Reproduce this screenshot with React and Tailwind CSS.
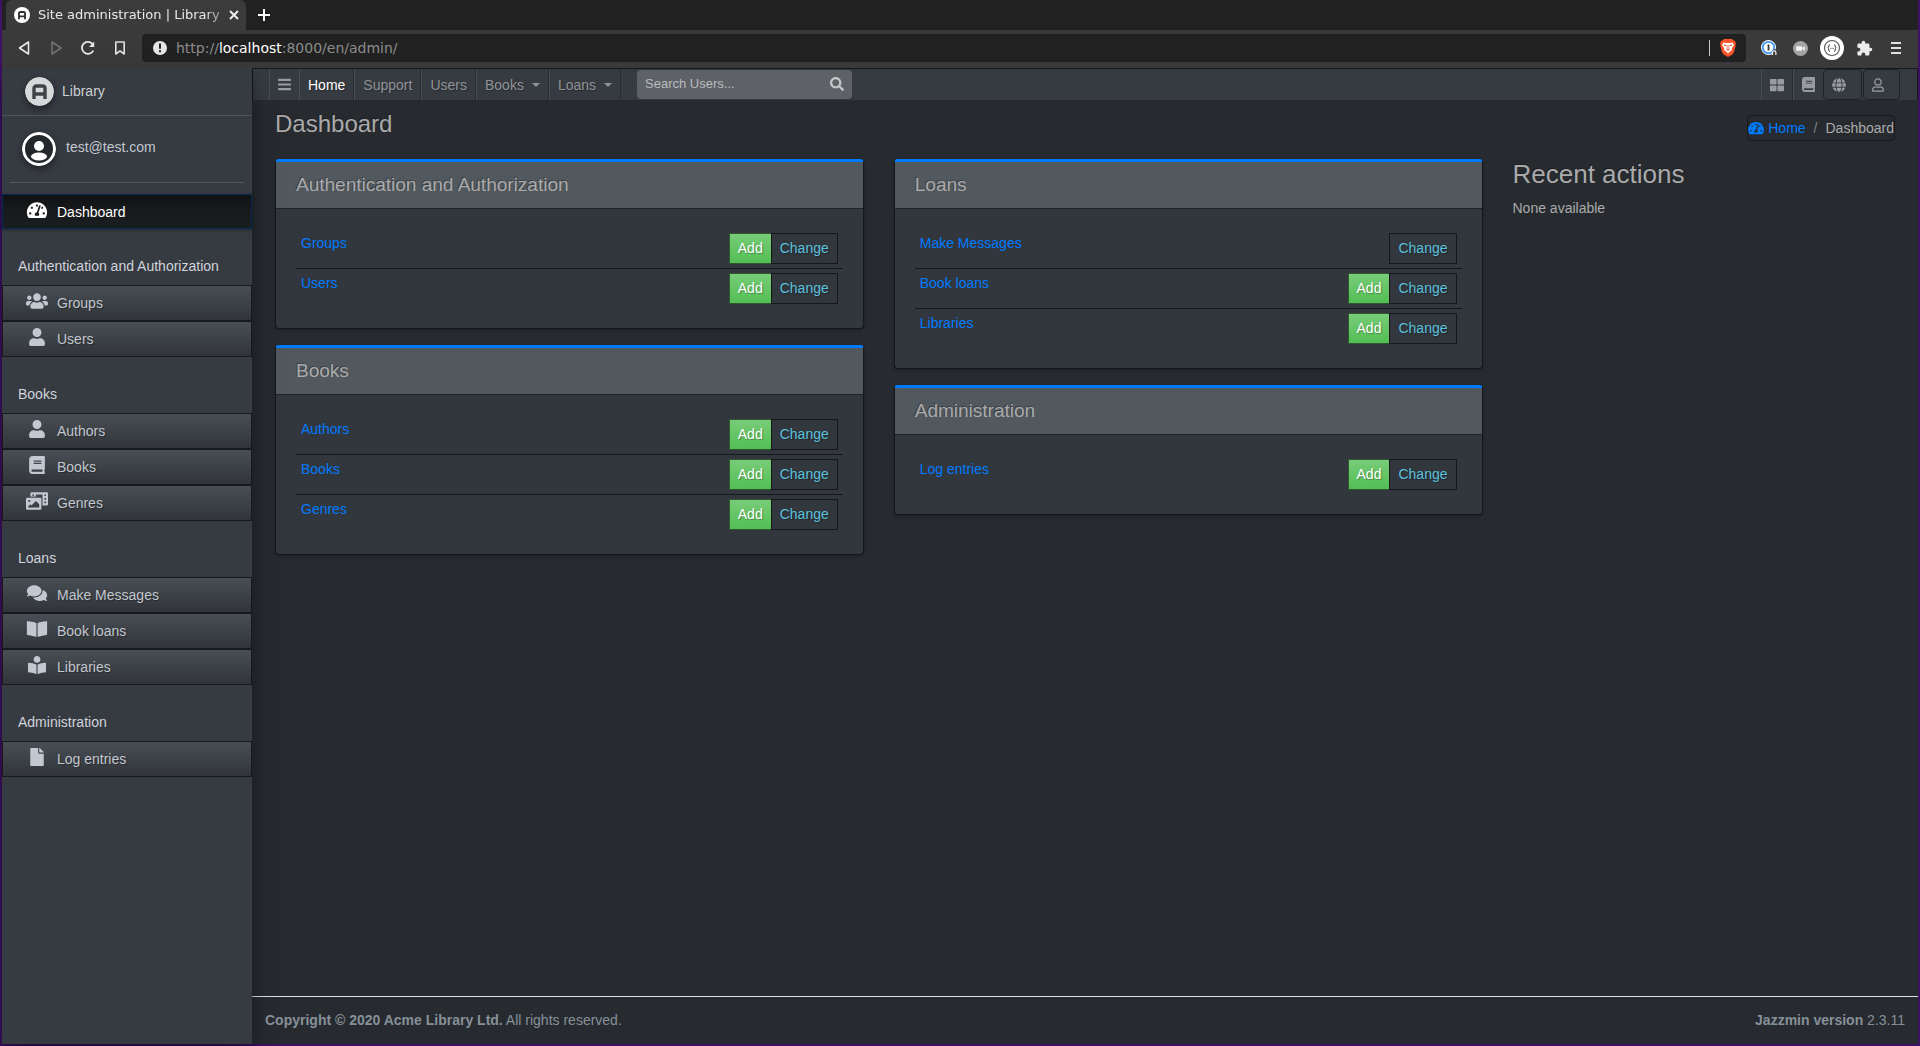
import React, { useState } from 'react';
import {
  FaBars,
  FaBook,
  FaBookOpen,
  FaBookReader,
  FaComments,
  FaFile,
  FaGlobe,
  FaPhotoVideo,
  FaRegUser,
  FaSearch,
  FaTachometerAlt,
  FaThLarge,
  FaUser,
  FaUsers,
} from 'react-icons/fa';
import { MdExtension } from 'react-icons/md';

const menu = [
  { title: 'Authentication and Authorization', items: [['Groups', FaUsers], ['Users', FaUser]] },
  { title: 'Books', items: [['Authors', FaUser], ['Books', FaBook], ['Genres', FaPhotoVideo]] },
  { title: 'Loans', items: [['Make Messages', FaComments], ['Book loans', FaBookOpen], ['Libraries', FaBookReader]] },
  { title: 'Administration', items: [['Log entries', FaFile]] },
];

const leftCards = [
  { title: 'Authentication and Authorization', models: [{ name: 'Groups', add: true }, { name: 'Users', add: true }] },
  { title: 'Books', models: [{ name: 'Authors', add: true }, { name: 'Books', add: true }, { name: 'Genres', add: true }] },
];

const rightCards = [
  { title: 'Loans', models: [{ name: 'Make Messages', add: false }, { name: 'Book loans', add: true }, { name: 'Libraries', add: true }] },
  { title: 'Administration', models: [{ name: 'Log entries', add: true }] },
];

function Logo({ className, bg, fg }) {
  return (
    <svg className={className} viewBox="0 0 29 29" aria-hidden="true">
      <circle cx="14.5" cy="14.5" r="14.5" fill={bg} />
      <path d="M9 22V11.5Q9 9 11.5 9H17.5Q20 9 20 11.5V22M9 17H20" fill="none" stroke={fg} strokeWidth="3.4" />
    </svg>
  );
}

function BrowserBar() {
  return (
    <header className="font-['DejaVu_Sans',sans-serif]">
      <div className="flex h-[30px] items-center bg-[#212121] pl-1">
        <div className="flex h-full w-60 items-center rounded-t-md bg-[#3b3b3b] px-2 pr-1.5">
          <Logo className="size-4 shrink-0" bg="#ffffff" fg="#333333" />
          <span className="ml-2 flex-1 whitespace-nowrap text-[13px] text-[#e8e8e8] [mask-image:linear-gradient(to_right,black_88%,#0003)]">
            Site administration | Library
          </span>
          <button type="button" aria-label="Close tab">
            <svg className="size-3" viewBox="0 0 12 12" stroke="#eeeeee" strokeWidth="2">
              <path d="M2 2l8 8M10 2l-8 8" />
            </svg>
          </button>
        </div>
        <button type="button" aria-label="New tab" className="ml-3">
          <svg className="size-3" viewBox="0 0 12 12" stroke="#ffffff" strokeWidth="2">
            <path d="M6 0v12M0 6h12" />
          </svg>
        </button>
      </div>
      <div className="flex h-[38px] items-center bg-[#3a3a3a] pb-0.5 pl-3.5">
        <button type="button" aria-label="Back" className="mr-4">
          <svg className="size-4" viewBox="0 0 16 16" fill="none" stroke="#e8e8e8" strokeWidth="1.6" strokeLinejoin="round">
            <path d="M12.5 2v12L3.5 8z" />
          </svg>
        </button>
        <button type="button" aria-label="Forward" className="mr-4">
          <svg className="size-4" viewBox="0 0 16 16" fill="none" stroke="#737373" strokeWidth="1.6" strokeLinejoin="round">
            <path d="M4 2v12l9-6z" />
          </svg>
        </button>
        <button type="button" aria-label="Reload" className="mr-4">
          <svg className="size-4" viewBox="0 0 16 16" fill="none" stroke="#e8e8e8" strokeWidth="1.8">
            <path d="M13.3 10.6A6 6 0 1 1 12.4 3.8" />
            <path d="M14.2 1.5V7H9z" fill="#e8e8e8" stroke="none" />
          </svg>
        </button>
        <button type="button" aria-label="Bookmark" className="mr-3.5">
          <svg className="size-4" viewBox="0 0 16 16" fill="none" stroke="#e0e0e0" strokeWidth="1.6" strokeLinejoin="round">
            <path d="M3.8 2h8.4v12L8 10.8 3.8 14z" />
          </svg>
        </button>
        <div className="flex h-7 flex-1 items-center rounded bg-[#212121] px-2.5 pl-[11px]">
          <svg className="size-3.5" viewBox="0 0 14 14" aria-hidden="true">
            <circle cx="7" cy="7" r="7" fill="#e6e6e6" />
            <path d="M7 2.6v5.2M7 9.2v2" stroke="#212121" strokeWidth="2" />
          </svg>
          <span className="ml-[9px] flex-1 text-sm text-[#8c8c8c]">
            http://<span className="text-white">localhost</span>:8000/en/admin/
          </span>
          <span className="mr-2.5 h-4 w-px bg-[#c8c8c8]" />
          <svg className="h-[18px] w-4" viewBox="0 0 16 18" aria-hidden="true">
            <path d="M4 0h8l1.5 1.6 1.5.4 1 2.4-.6 1.2.3 1.2-1.9 6.8-1.5 1.8L8 18l-4.3-2.6-1.5-1.8L.3 6.8l.3-1.2L0 4.4 1 2l1.5-.4z" fill="#fb542b" />
            <path d="M3.5 3.5l2.5.5h4l2.5-.5L14 6l-2.3 3.5.3 1.5-2 1.5L8 14.6 6 12.5 4 11l.3-1.5L2 6z" fill="#ffffff" />
            <path d="M4 6l2.800.7M12 6l-2.800.7M8 6.5v3M6.4 10L8 11l1.6-1" stroke="#fb542b" strokeWidth="1.1" fill="none" />
          </svg>
        </div>
        <div className="flex items-center pl-[15px] pr-[17px]">
          <svg className="size-4" viewBox="0 0 16 16" aria-hidden="true">
            <circle cx="7.5" cy="7.5" r="7.5" fill="#ffffff" />
            <circle cx="7.5" cy="7.5" r="5.7" fill="none" stroke="#3f96ee" strokeWidth="1.8" />
            <path d="M7.5 4.5v6" stroke="#333333" strokeWidth="1.8" />
            <path d="M12 9.5H16V16H11z" fill="#3a3a3a" />
            <path d="M11.5 15v-2.5a1.7 1.7 0 0 1 3.4 0V15" stroke="#f2f2f2" strokeWidth="1.2" fill="none" />
          </svg>
          <svg className="ml-4 size-[15px]" viewBox="0 0 16 16" aria-hidden="true">
            <circle cx="8" cy="8" r="8" fill="#a4a4a4" />
            <path d="M3.5 5.5h6v5h-6zM10 7.3l2.500-1.600v4.600L10 8.7z" fill="#f4f4f4" />
          </svg>
          <svg className="ml-3 size-6" viewBox="0 0 24 24" fill="none" aria-hidden="true">
            <circle cx="12" cy="12" r="12" fill="#ffffff" />
            <circle cx="12" cy="12" r="7.5" stroke="#555555" strokeWidth="1.1" />
            <path d="M10 8.8Q8.8 8.8 8.8 10T7.8 12Q8.8 12 8.8 14T10 15.2M14 8.8Q15.2 8.8 15.2 10T16.2 12Q15.2 12 15.2 14T14 15.2" stroke="#444444" />
            <path d="M10.3 12.3h3.6" stroke="#444444" strokeDasharray="0.8 0.6" />
          </svg>
          <MdExtension className="ml-3 size-[17px] text-[#ececec]" />
          <button type="button" aria-label="Browser menu" className="ml-[18px]">
            <svg className="h-3 w-2.5" viewBox="0 0 10 12" stroke="#e0e0e0" strokeWidth="2">
              <path d="M0 1h10M0 6h10M0 11h10" />
            </svg>
          </button>
        </div>
      </div>
    </header>
  );
}

function Sidebar() {
  return (
    <aside className="z-10 w-[250px] shrink-0 bg-[#363a41] shadow-[0_14px_28px_rgba(0,0,0,0.25),0_10px_10px_rgba(0,0,0,0.22)]">
      <a href="#" className="flex h-12 items-center border-b border-[#4b545c] pl-[23px] text-[#cdd0d3]">
        <Logo className="size-[29px] rounded-full shadow-[0_3px_6px_rgba(0,0,0,0.4)]" bg="#d7d8d9" fg="#3f4348" />
        <span className="ml-2 pb-0.5">Library</span>
      </a>
      <div className="mx-2 flex h-[67px] items-center border-b border-[#4f5962] pl-3">
        <svg className="size-[34px] rounded-full shadow-[0_3px_6px_rgba(0,0,0,0.4)]" viewBox="0 0 34 34" aria-hidden="true">
          <circle cx="17" cy="17" r="15.5" fill="#23272b" stroke="#ffffff" strokeWidth="3" />
          <circle cx="17" cy="14" r="5" fill="#ffffff" />
          <ellipse cx="17" cy="24.5" rx="8" ry="4" fill="#ffffff" />
        </svg>
        <a href="#" className="ml-2.5 pb-1 text-[#c2c7d0]">test@test.com</a>
      </div>
      <nav className="pt-[11px]">
        <a
          href="#"
          className="flex h-[35px] items-center border border-[#052c57] bg-linear-to-b from-[#101112] via-[#17191b] via-40% to-[#1b1e20] text-white shadow-[0_1px_3px_rgba(0,0,0,0.3)]"
        >
          <FaTachometerAlt className="mb-1 ml-[23px] mr-[9px] h-[18px] w-[22px]" />
          Dashboard
        </a>
        {menu.map((group) => (
          <section key={group.title}>
            <h2 className="flex h-14 items-end px-4 pb-2 leading-[21px] text-[#d0d4db]">{group.title}</h2>
            <ul>
              {group.items.map(([label, Icon]) => (
                <li key={label}>
                  <a
                    href="#"
                    className="flex h-9 items-center border border-[#17191c] bg-linear-to-b from-[#484e55] via-[#3a3f44] via-60% to-[#313539] text-[#c2c7d0] [text-shadow:1px_1px_1px_rgba(0,0,0,0.3)]"
                  >
                    <Icon className="mb-1 ml-[23px] mr-[9px] h-[18px] w-[22px]" />
                    {label}
                  </a>
                </li>
              ))}
            </ul>
          </section>
        ))}
      </nav>
    </aside>
  );
}

function NavLink({ children, active, caret }) {
  return (
    <a
      href="#"
      className={`flex items-center border-l border-r border-l-[#484e54] border-r-[#282c30] px-2 [text-shadow:1px_1px_1px_rgba(0,0,0,0.3)] ${active ? 'text-white' : 'text-[#919497]'}`}
    >
      {children}
      {caret && <span className="ml-2 border-x-4 border-t-4 border-x-transparent border-t-current" />}
    </a>
  );
}

function Navbar() {
  const [query, setQuery] = useState('');
  return (
    <nav className="flex h-8 border border-b-0 border-[#15171a] bg-[#363b42] pl-4 pr-[17px] text-[#999c9f]">
      <button type="button" aria-label="Toggle sidebar" className="flex w-[30px] items-center border-l border-[#484e54] pl-2">
        <FaBars className="h-[15px] w-[13px]" />
      </button>
      <NavLink active>Home</NavLink>
      <NavLink>Support</NavLink>
      <NavLink>Users</NavLink>
      <NavLink caret>Books</NavLink>
      <NavLink caret>Loans</NavLink>
      <form className="my-px ml-4 flex w-[215px] items-center rounded bg-[#5e6267]" onSubmit={(e) => e.preventDefault()}>
        <input
          type="search"
          aria-label="Search Users"
          placeholder="Search Users..."
          value={query}
          onChange={(e) => setQuery(e.target.value)}
          className="min-w-0 flex-1 bg-transparent pl-2 text-[13px] text-white outline-none placeholder:text-[#b9bcbf]"
        />
        <button type="submit" aria-label="Search" className="px-2 pb-0.5 text-[#c4c6c8]">
          <FaSearch className="size-3.5" />
        </button>
      </form>
      <div className="ml-auto flex">
        <button type="button" aria-label="Apps" className="flex items-center border-l border-r border-l-[#484e54] border-r-[#282c30] px-2">
          <FaThLarge className="size-3.5" />
        </button>
        <button type="button" aria-label="Documentation" className="flex w-[30px] items-center border-l border-[#484e54] pl-2">
          <FaBook className="h-[15px] w-[13px]" />
        </button>
        <button type="button" aria-label="Language" className="flex w-[39px] items-center rounded border border-[#1f2226] pl-2">
          <FaGlobe className="size-3.5" />
        </button>
        <button type="button" aria-label="Account" className="ml-px flex w-[37px] items-center rounded border border-[#1f2226] pl-2">
          <FaRegUser className="h-3.5 w-3" />
        </button>
      </div>
    </nav>
  );
}

function AppCard({ title, models }) {
  return (
    <section className="mb-4 rounded border border-t-[3px] border-[#15171a] border-t-[#007bff] bg-[#32373d] shadow-[0_1px_3px_rgba(0,0,0,0.3)]">
      <h2 className="flex h-[47px] items-center border-b border-[#202327] bg-[#51585e] px-5 text-[19px] text-[#aaaaaa] [text-shadow:-1px_-1px_0_rgba(0,0,0,0.3)]">
        {title}
      </h2>
      <div className="p-5 pt-[19px]">
        <table className="w-full border-separate border-spacing-0">
          <tbody>
            {models.map((model) => (
              <tr key={model.name} className="group">
                <td className="border-t border-[#15171a] px-[5px] py-1 align-top leading-[21px] group-first:border-transparent">
                  <a href="#" className="text-[#007bff]">{model.name}</a>
                </td>
                <td className="border-t border-[#15171a] px-[5px] py-1 group-first:border-transparent">
                  <div className="flex justify-end">
                    {model.add && (
                      <a href="#" className="flex h-[31px] items-center border border-r-0 border-[#2c5a2e] bg-linear-to-b from-[#78cc78] via-[#62c462] via-60% to-[#53be53] px-2 pb-px text-white [text-shadow:1px_1px_1px_rgba(0,0,0,0.3)]">
                        Add
                      </a>
                    )}
                    <a href="#" className="flex h-[31px] items-center border border-[#15171a] px-2 pb-px text-[#5bc0de] [text-shadow:1px_1px_1px_rgba(0,0,0,0.3)]">
                      Change
                    </a>
                  </div>
                </td>
              </tr>
            ))}
          </tbody>
        </table>
      </div>
    </section>
  );
}

export default function App() {
  return (
    <div className="flex min-h-screen flex-col border-x-2 border-b-2 border-[#3d1163] bg-[#272b30] font-['Liberation_Sans',Arial,sans-serif] text-sm text-[#aaaaaa]">
      <BrowserBar />
      <div className="flex flex-1">
        <Sidebar />
        <div className="flex min-w-0 flex-1 flex-col">
          <Navbar />
          <main className="flex-1 px-2">
            <div className="flex items-start justify-between px-[15px] pb-[18px] pt-[7px]">
              <h1 className="h-[34px] text-2xl leading-[34px] [text-shadow:-1px_-1px_0_rgba(0,0,0,0.3)]">Dashboard</h1>
              <ol className="mt-2 flex h-[26px] items-center rounded border border-[#15171a]">
                <li>
                  <a href="#" className="flex items-center gap-1 text-[#007bff]">
                    <FaTachometerAlt className="h-3.5 w-4" />
                    Home
                  </a>
                </li>
                <li className="px-2 text-[#7a8288]">/</li>
                <li>Dashboard</li>
              </ol>
            </div>
            <div className="grid grid-cols-8">
              <div className="col-span-3 px-[15px]">
                {leftCards.map((card) => <AppCard key={card.title} {...card} />)}
              </div>
              <div className="col-span-3 px-[15px]">
                {rightCards.map((card) => <AppCard key={card.title} {...card} />)}
              </div>
              <div className="col-span-2 px-[15px]">
                <h2 className="text-[26px] leading-[31px] [text-shadow:-1px_-1px_0_rgba(0,0,0,0.3)]">Recent actions</h2>
                <p className="mt-2 leading-[21px]">None available</p>
              </div>
            </div>
          </main>
          <footer className="flex h-12 items-center justify-between border-t border-[#dee2e6] px-[13px] pb-0.5 text-[#869099]">
            <div><strong>Copyright © 2020 Acme Library Ltd.</strong> All rights reserved.</div>
            <div><b>Jazzmin version</b> 2.3.11</div>
          </footer>
        </div>
      </div>
    </div>
  );
}
